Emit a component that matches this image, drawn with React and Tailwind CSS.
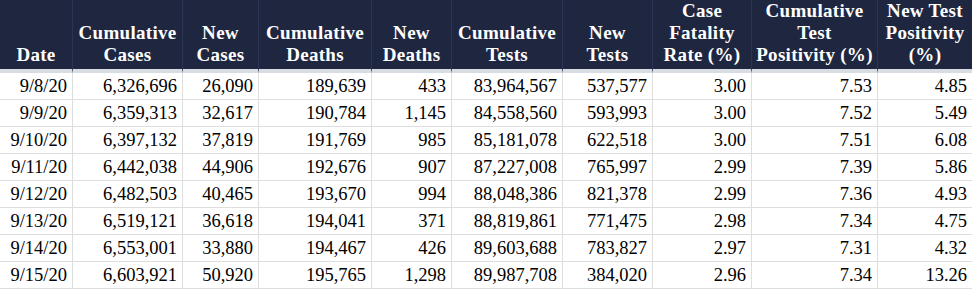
import React from "react";

const columns = [
  { key: "date", label: ["Date"], width: 73 },
  { key: "cumCases", label: ["Cumulative", "Cases"], width: 110 },
  { key: "newCases", label: ["New", "Cases"], width: 76 },
  { key: "cumDeaths", label: ["Cumulative", "Deaths"], width: 113 },
  { key: "newDeaths", label: ["New", "Deaths"], width: 80 },
  { key: "cumTests", label: ["Cumulative", "Tests"], width: 111 },
  { key: "newTests", label: ["New", "Tests"], width: 90 },
  { key: "cfr", label: ["Case", "Fatality", "Rate (%)"], width: 99 },
  { key: "cumPos", label: ["Cumulative", "Test", "Positivity (%)"], width: 126 },
  { key: "newPos", label: ["New Test", "Positivity", "(%)"], width: 94 },
];

const rows = [
  ["9/8/20", "6,326,696", "26,090", "189,639", "433", "83,964,567", "537,577", "3.00", "7.53", "4.85"],
  ["9/9/20", "6,359,313", "32,617", "190,784", "1,145", "84,558,560", "593,993", "3.00", "7.52", "5.49"],
  ["9/10/20", "6,397,132", "37,819", "191,769", "985", "85,181,078", "622,518", "3.00", "7.51", "6.08"],
  ["9/11/20", "6,442,038", "44,906", "192,676", "907", "87,227,008", "765,997", "2.99", "7.39", "5.86"],
  ["9/12/20", "6,482,503", "40,465", "193,670", "994", "88,048,386", "821,378", "2.99", "7.36", "4.93"],
  ["9/13/20", "6,519,121", "36,618", "194,041", "371", "88,819,861", "771,475", "2.98", "7.34", "4.75"],
  ["9/14/20", "6,553,001", "33,880", "194,467", "426", "89,603,688", "783,827", "2.97", "7.31", "4.32"],
  ["9/15/20", "6,603,921", "50,920", "195,765", "1,298", "89,987,708", "384,020", "2.96", "7.34", "13.26"],
];

export default function App() {
  return (
    <div className="w-[972px] h-[292px] overflow-hidden bg-white font-['Liberation_Serif',serif] text-black">
      <table className="w-[972px] table-fixed border-separate border-spacing-0">
        <colgroup>
          {columns.map((c) => (
            <col key={c.key} style={{ width: c.width }} />
          ))}
        </colgroup>
        <thead>
          <tr>
            {columns.map((c) => (
              <th
                key={c.key}
                className="h-[73px] bg-[#1f2740] border-b-4 border-r border-b-[#d8dce3] border-r-[#2b3450] last:border-r-0 px-1 pb-[3px] align-bottom text-center text-[19px] font-bold leading-[22px] tracking-[0.3px] text-white"
              >
                {c.label.map((line, i) => (
                  <div key={i} className="whitespace-nowrap">
                    {line}
                  </div>
                ))}
              </th>
            ))}
          </tr>
        </thead>
        <tbody>
          {rows.map((r) => (
            <tr key={r[0]}>
              {r.map((v, i) => (
                <td
                  key={i}
                  className="h-[27px] border-b border-r border-[#dedede] last:border-r-0 pr-[5px] pt-[1px] text-right align-middle text-[18.5px] leading-none"
                >
                  {v}
                </td>
              ))}
            </tr>
          ))}
        </tbody>
      </table>
    </div>
  );
}
